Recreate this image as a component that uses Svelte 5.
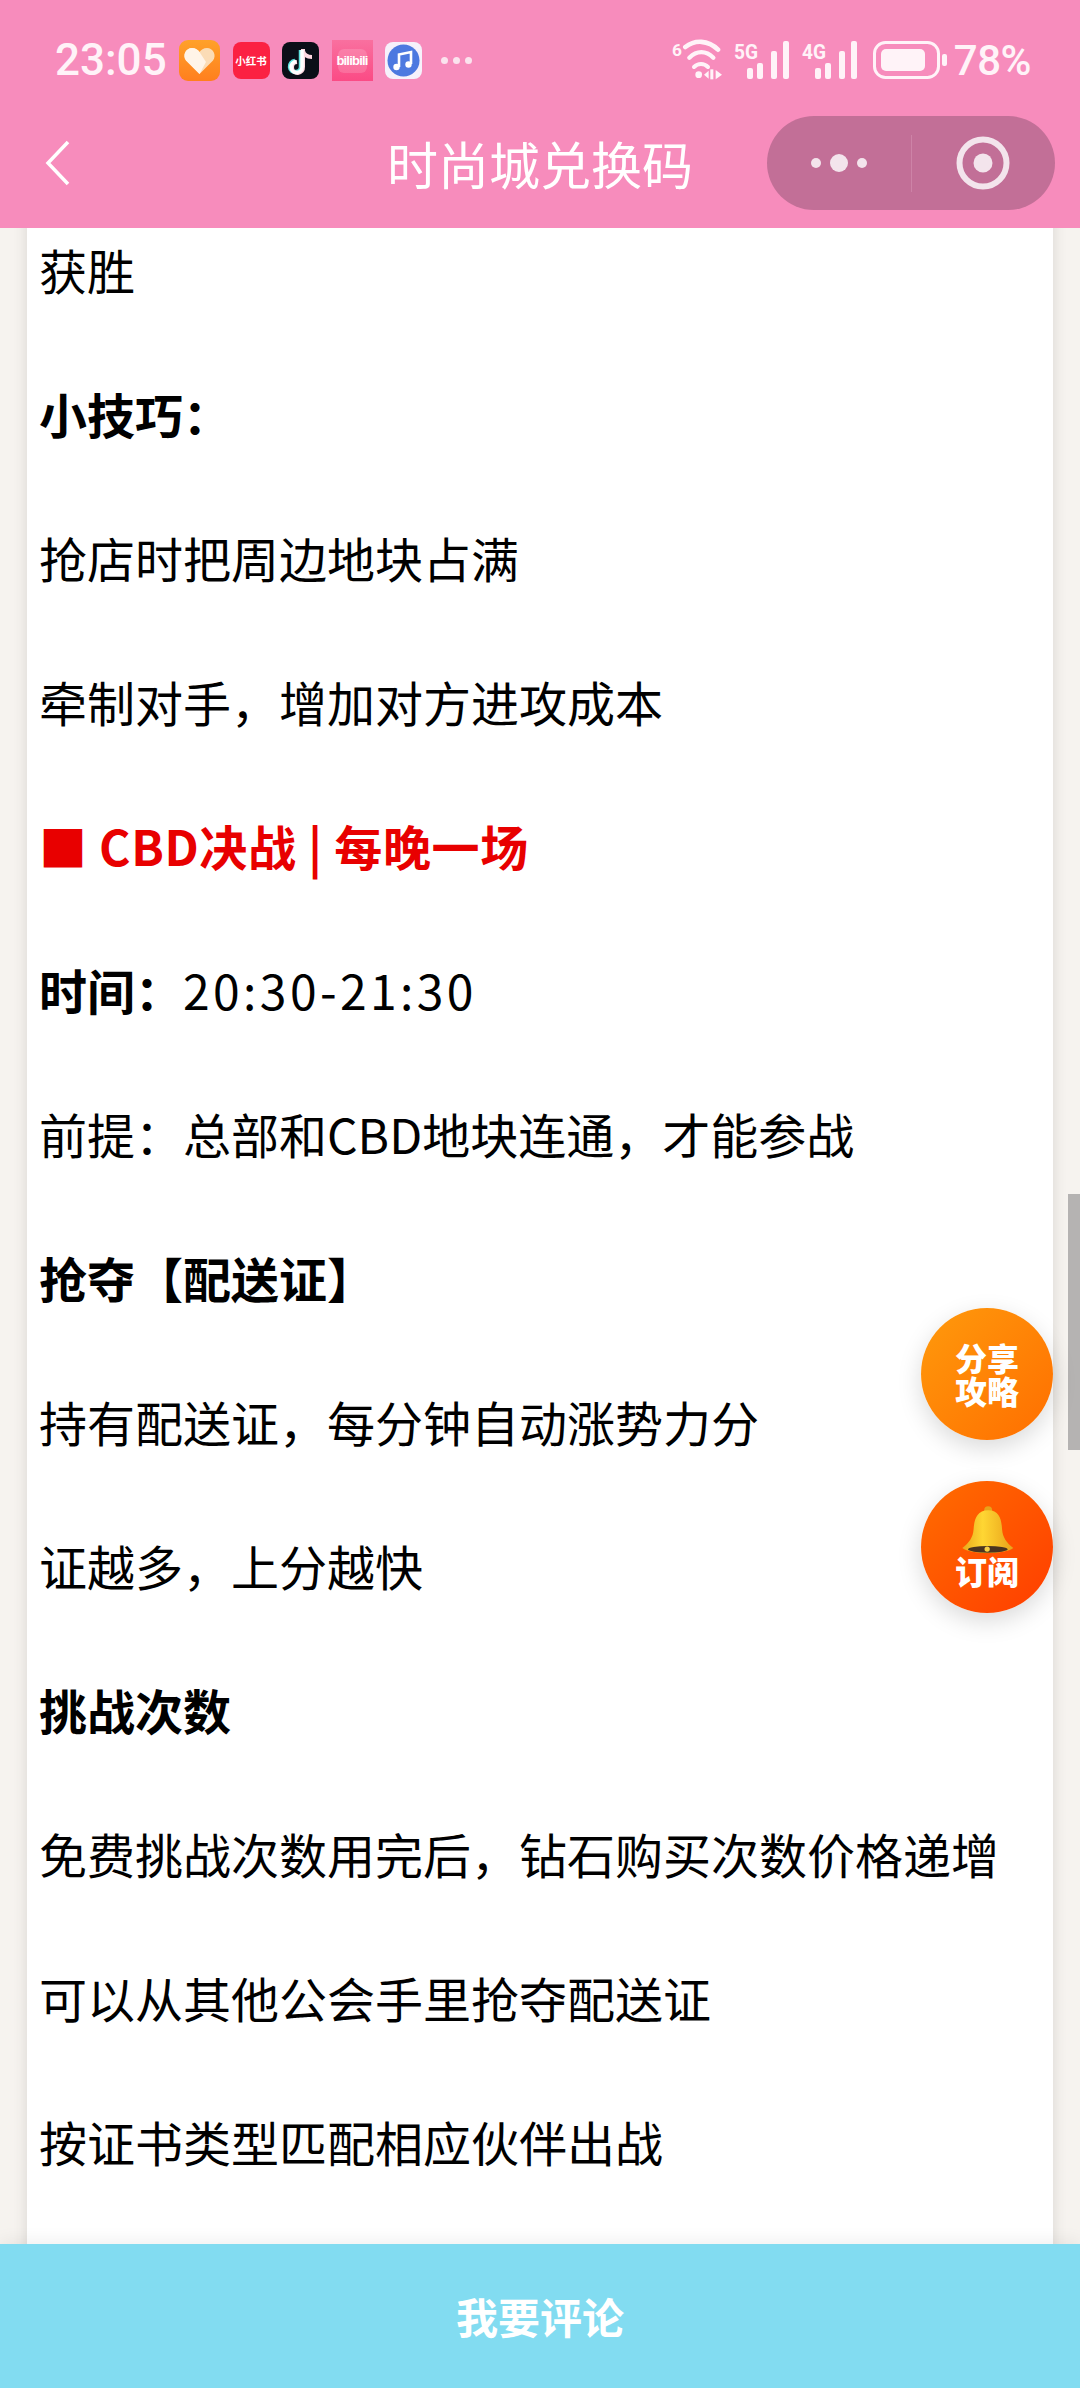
<script>
  const lines = [
    { text: '获胜' },
    { text: '小技巧：', kind: 'bold' },
    { text: '抢店时把周边地块占满' },
    { text: '牵制对手，增加对方进攻成本' },
    { text: '■ CBD决战 | 每晚一场', kind: 'alert' },
    { label: '时间：', time: '20:30-21:30' },
    { text: '前提：总部和CBD地块连通，才能参战' },
    { text: '抢夺【配送证】', kind: 'bold' },
    { text: '持有配送证，每分钟自动涨势力分' },
    { text: '证越多，上分越快' },
    { text: '挑战次数', kind: 'bold' },
    { text: '免费挑战次数用完后，钻石购买次数价格递增' },
    { text: '可以从其他公会手里抢夺配送证' },
    { text: '按证书类型匹配相应伙伴出战' }
  ];
</script>

<div class="page">
  <header class="top">
    <div class="status">
      <span class="clock">23:05</span>
      <div class="apps">
        <svg width="41" height="41" viewBox="0 0 41 41">
          <defs>
            <linearGradient id="heartBg" x1="0" y1="0" x2="0" y2="1">
              <stop offset="0" stop-color="#ffa12a" />
              <stop offset="1" stop-color="#ff7f1e" />
            </linearGradient>
          </defs>
          <rect width="41" height="41" rx="9" fill="url(#heartBg)" />
          <path d="M20.5 34 L7 20.5 C3 15 7 8 13 8 C16.5 8 19 10 20.5 12 C22 10 24.5 8 28 8 C34 8 38 15 34 20.5 Z" fill="#fbdcb6" />
          <path d="M20.5 34 L7 20.5 C3 15 7 8 13 8 C16.5 8 19 10 20.5 12 L27 22 Z" fill="#fff4e8" />
        </svg>
        <div class="xhs">小红书</div>
        <svg width="37" height="37" viewBox="0 0 37 37">
          <rect width="37" height="37" rx="8" fill="#0b0f18" />
          <path d="M19 8 V24 A5.5 5.5 0 1 1 13 19" fill="none" stroke="#5fe3df" stroke-width="4.5" />
          <path d="M21 7 V25 A5.5 5.5 0 1 1 15 20 M21 9 C22 13 25 15 30 15" fill="none" stroke="#ffd9e2" stroke-width="4" />
          <path d="M20 8 V25 A5.5 5.5 0 1 1 14 19.5" fill="none" stroke="#fff" stroke-width="3.5" />
        </svg>
        <div class="bili">bilibili</div>
        <svg width="37" height="37" viewBox="0 0 37 37">
          <rect width="37" height="37" rx="8" fill="#f6f1fb" />
          <circle cx="18.5" cy="18.5" r="16" fill="#4d79e0" />
          <path d="M14 25 V12.5 L26 10 V22" fill="none" stroke="#fff" stroke-width="2.6" />
          <circle cx="11.5" cy="25" r="3.2" fill="#fff" />
          <circle cx="23.5" cy="22.5" r="3.2" fill="#fff" />
        </svg>
        <div class="more"><i></i><i></i><i></i></div>
      </div>
      <div class="indicators">
        <svg class="wifi" width="52" height="42" viewBox="0 0 156 126">
          <text x="0" y="50" class="mini" font-size="52">6</text>
          <path d="M40 24 C68 2 108 2 138 32" class="arc" stroke-width="14" />
          <path d="M52 56 C74 34 102 34 124 56" class="arc" stroke-width="13" />
          <path d="M66 84 C78 72 96 72 108 84" class="arc" stroke-width="12" />
          <circle cx="80" cy="107" r="10" fill="#fff3f8" />
          <path d="M96 107 L110 95 V119 Z M131 93 L150 107 L131 121 Z" fill="#fff3f8" />
          <rect x="115" y="91" width="9" height="30" fill="#fff3f8" />
        </svg>
        <svg width="56" height="40" viewBox="0 0 56 40">
          <text x="0" y="19" class="mini" font-size="21" textLength="24" lengthAdjust="spacingAndGlyphs">5G</text>
          <rect x="13" y="28" width="6" height="11" rx="2" fill="#fff3f8" />
          <rect x="23" y="23" width="6" height="16" rx="2" fill="#fff3f8" />
          <rect x="37" y="11" width="6" height="28" rx="2" fill="#fff3f8" />
          <rect x="49" y="1" width="6" height="38" rx="2" fill="#fff3f8" />
        </svg>
        <svg width="56" height="40" viewBox="0 0 56 40">
          <text x="0" y="19" class="mini" font-size="21" textLength="24" lengthAdjust="spacingAndGlyphs">4G</text>
          <rect x="13" y="28" width="6" height="11" rx="2" fill="#fff3f8" />
          <rect x="23" y="23" width="6" height="16" rx="2" fill="#fff3f8" />
          <rect x="37" y="11" width="6" height="28" rx="2" fill="#fff3f8" />
          <rect x="49" y="1" width="6" height="38" rx="2" fill="#fff3f8" />
        </svg>
        <svg class="cell" width="75" height="38" viewBox="0 0 75 38">
          <rect x="1.5" y="1.5" width="64" height="35" rx="11" fill="none" stroke="#fff3f8" stroke-width="3" />
          <rect x="8" y="8" width="44" height="22" rx="5" fill="#fff3f8" />
          <rect x="69" y="13" width="5" height="12" rx="2" fill="#fff3f8" />
        </svg>
        <span class="battery">78%</span>
      </div>
    </div>

    <nav class="bar">
      <div class="back">
        <svg width="26" height="46" viewBox="0 0 26 46">
          <path d="M23 2 L3 23 L23 44" fill="none" stroke="#fff" stroke-width="3.5" />
        </svg>
      </div>
      <h1>时尚城兑换码</h1>
      <div class="right">
        <div class="capsule">
          <div class="cap-cell">
            <svg width="60" height="20" viewBox="0 0 60 20">
              <circle cx="7" cy="10" r="5" fill="#f3e4ec" />
              <circle cx="30" cy="10" r="9" fill="#f3e4ec" />
              <circle cx="53" cy="10" r="5" fill="#f3e4ec" />
            </svg>
          </div>
          <div class="cap-cell split">
            <svg width="54" height="54" viewBox="0 0 54 54">
              <circle cx="27" cy="27" r="23.5" fill="none" stroke="#f3e4ec" stroke-width="6" />
              <circle cx="27" cy="27" r="9.5" fill="#f3e4ec" />
            </svg>
          </div>
        </div>
      </div>
    </nav>
  </header>

  <main class="scroll">
    <article class="card">
      {#each lines as line}
        {#if line.time}
          <p><b>{line.label}</b><span class="time">{line.time}</span></p>
        {:else}
          <p class={line.kind}>{line.text}</p>
        {/if}
      {/each}
    </article>

    <div class="thumb"></div>

    <div class="fabs">
      <button class="fab share">分享<br />攻略</button>
      <button class="fab sub">
        <svg width="53" height="48" viewBox="60 45 160 145">
          <defs>
            <linearGradient id="bell" x1="0" y1="0" x2="1" y2="0">
              <stop offset="0" stop-color="#e9a91c" />
              <stop offset="0.4" stop-color="#ffd633" />
              <stop offset="1" stop-color="#e8a21a" />
            </linearGradient>
          </defs>
          <circle cx="142" cy="58" r="12" fill="#e8a21a" />
          <path d="M142 58 C108 58 100 85 98 115 C96 140 85 155 64 172 C90 192 192 192 218 172 C197 155 186 140 184 115 C182 85 176 58 142 58 Z" fill="url(#bell)" />
          <ellipse cx="141" cy="176" rx="60" ry="10" fill="#4a3420" />
          <circle cx="139" cy="175" r="8" fill="#f7cf45" />
        </svg>
        <span>订阅</span>
      </button>
    </div>
  </main>

  <footer class="comment">我要评论</footer>
</div>

<style>
  :global(body) {
    margin: 0;
    font-family: "Noto Sans CJK SC", sans-serif;
  }

  .page {
    width: 1080px;
    height: 2388px;
    display: flex;
    flex-direction: column;
    overflow: hidden;
  }

  .top {
    background: #f78cbc;
    color: #fff;
    flex: none;
  }

  .status {
    height: 112px;
    box-sizing: border-box;
    padding: 8px 49px 0 55px;
    display: flex;
    align-items: center;
  }

  .clock {
    font: 500 44px Roboto, sans-serif;
    color: #fff3f8;
    width: 124px;
  }

  .apps {
    display: flex;
    align-items: center;
    gap: 12.5px;
  }

  .xhs {
    width: 37px;
    height: 37px;
    border-radius: 8px;
    background: #fb2142;
    color: #fff;
    font-size: 10.5px;
    font-weight: 700;
    white-space: nowrap;
    display: flex;
    align-items: center;
    justify-content: center;
    overflow: hidden;
  }

  .bili {
    position: relative;
    width: 41px;
    height: 41px;
    background: linear-gradient(#f9709f, #fb4b85);
    color: #fff;
    font: 700 13px "Liberation Sans", sans-serif;
    letter-spacing: -0.8px;
    display: flex;
    align-items: center;
    justify-content: center;
  }

  /* the faint tv body behind the word */
  .bili::before {
    content: "";
    position: absolute;
    left: 6px;
    top: 9px;
    width: 29px;
    height: 24px;
    border-radius: 6px;
    background: rgba(255, 255, 255, 0.16);
  }

  .more {
    display: flex;
    gap: 5px;
    margin-left: 6px;
  }

  .more i {
    width: 7px;
    height: 7px;
    border-radius: 50%;
    background: #fbe3ee;
  }

  .indicators {
    margin-left: auto;
    display: flex;
    align-items: center;
    gap: 12px;
  }

  .indicators svg {
    display: block;
  }

  .wifi {
    margin-right: -2px;
  }

  .cell {
    margin-left: 3px;
  }

  .mini {
    font-family: Roboto, sans-serif;
    font-weight: 700;
    fill: #fff3f8;
  }

  .arc {
    fill: none;
    stroke: #fff3f8;
    stroke-linecap: round;
  }

  .battery {
    font: 500 42px Roboto, sans-serif;
    color: #fff3f8;
    letter-spacing: -0.5px;
    margin-left: -6px;
  }

  .bar {
    height: 116px;
    padding: 4px 0 18px;
    box-sizing: border-box;
    display: grid;
    grid-template-columns: 1fr auto 1fr;
    align-items: center;
  }

  .back {
    padding-left: 45px;
  }

  .back svg {
    display: block;
  }

  h1 {
    margin: 0;
    font-size: 51px;
    font-weight: 400;
    line-height: 70px;
    color: #fff;
  }

  .right {
    display: flex;
    justify-content: flex-end;
    padding-right: 25px;
  }

  .capsule {
    width: 288px;
    height: 94px;
    border-radius: 47px;
    background: #c26f97;
    display: flex;
    align-items: center;
  }

  .cap-cell {
    width: 144px;
    height: 57px;
    display: flex;
    align-items: center;
    justify-content: center;
  }

  .split {
    border-left: 1px solid #cd83a7;
  }

  .scroll {
    position: relative;
    flex: 1;
    min-height: 0;
    overflow: hidden;
    background: #f6f3ef;
  }

  .card {
    width: 1026px;
    height: 2100px;
    margin: -31px 0 0 27px;
    padding-left: 12px;
    box-sizing: border-box;
    background: #fff;
    box-shadow: 0 0 14px rgba(0, 0, 0, 0.12);
  }

  p {
    margin: 0;
    font-size: 48px;
    line-height: 144px;
    height: 144px;
    color: #000;
    white-space: nowrap;
  }

  .bold,
  b {
    font-weight: 700;
  }

  .alert {
    color: #e80000;
    font-weight: 700;
    letter-spacing: 0.6px;
  }

  .time {
    letter-spacing: 3.4px;
  }

  .thumb {
    position: absolute;
    right: 0;
    top: 966px;
    width: 12px;
    height: 256px;
    background: #b5b3b2;
  }

  .fabs {
    position: absolute;
    left: 921px;
    top: 1080px;
    display: flex;
    flex-direction: column;
    gap: 41px;
  }

  .fab {
    width: 132px;
    height: 132px;
    border: 0;
    padding: 0;
    border-radius: 50%;
    color: #fff;
    font-family: inherit;
    font-size: 32px;
    font-weight: 900;
    line-height: 33px;
    box-shadow: 0 8px 24px rgba(0, 0, 0, 0.15);
    display: flex;
    flex-direction: column;
    align-items: center;
    justify-content: center;
  }

  .fab svg {
    display: block;
    margin-top: -2px;
  }

  .share {
    display: block;
    background: linear-gradient(135deg, #ff9a0c, #ff6e00);
  }

  .sub {
    background: linear-gradient(135deg, #ff6d00, #ff3d00);
  }

  .comment {
    position: relative;
    flex: none;
    height: 144px;
    background: #82dcf1;
    color: #fff;
    font-size: 42px;
    font-weight: 700;
    line-height: 144px;
    text-align: center;
    box-shadow: 0 -4px 16px rgba(0, 0, 0, 0.06);
  }
</style>
